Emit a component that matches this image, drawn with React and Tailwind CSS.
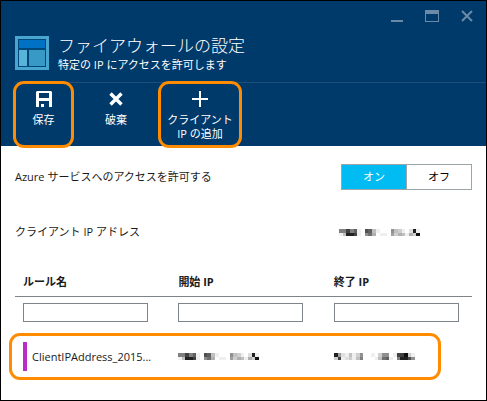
const MASKED_START = [
  '88c8a10ba41000743102e1',
  '14eec1079501106354153f',
];
const MASKED_END = [
  'e6214137001037701ccf31',
  '3c123148000149a108eeb7',
];

function MaskedAddress({ rows, label }) {
  return (
    <svg
      width="81"
      height="7"
      viewBox="0 0 22 2"
      preserveAspectRatio="none"
      shapeRendering="crispEdges"
      role="img"
      aria-label={label}
      className="block"
    >
      {rows.map((row, y) =>
        row.split('').map((c, x) => (
          <rect key={`${x}-${y}`} x={x} y={y} width="1" height="1" fill="#111" fillOpacity={parseInt(c, 16) / 15} />
        ))
      )}
    </svg>
  );
}

function Highlight({ className }) {
  return <span aria-hidden="true" className={`pointer-events-none absolute rounded-[11px] border-3 border-[#ff8c00] ${className}`} />;
}

function BladeIcon() {
  return (
    <svg width="34" height="34" viewBox="0 0 34 34" shapeRendering="crispEdges" aria-hidden="true" className="shrink-0">
      <rect width="34" height="34" fill="#48a5cf" />
      <rect x="3" y="3" width="28" height="28" fill="#00477a" />
      <rect x="4" y="4" width="26" height="8" fill="#0072c6" />
      <rect x="4" y="14" width="8" height="16" fill="#59b4d9" />
      <rect x="14" y="14" width="16" height="16" fill="#3999c6" />
    </svg>
  );
}

function SaveIcon() {
  return (
    <svg width="16" height="16" viewBox="0 0 16 16" aria-hidden="true">
      <path fill="#fff" fillRule="evenodd" d="M1 0h14l1 1v15h-3v-6H3v6H0V1zM3 2v5h10V2z" />
      <path fill="#fff" d="M5 13h3v3H5z" />
    </svg>
  );
}

function DiscardIcon() {
  return (
    <svg width="16" height="16" viewBox="0 0 16 16" aria-hidden="true">
      <path d="M2.5 2.5l11 11M13.5 2.5l-11 11" stroke="#fff" strokeWidth="3.4" />
    </svg>
  );
}

function AddIcon() {
  return (
    <svg width="16" height="16" viewBox="0 0 16 16" aria-hidden="true">
      <path d="M7 0h2v7h7v2H9v7H7V9H0V7h7z" fill="#fff" />
    </svg>
  );
}

function WindowControls() {
  return (
    <div className="flex justify-end gap-[22px] pt-[9px] pr-[13px]">
      <button type="button" aria-label="最小化">
        <svg width="12" height="12" viewBox="0 0 12 12" className="block"><path d="M0 10h12v2H0z" fill="#6b8aa8" /></svg>
      </button>
      <button type="button" aria-label="最大化">
        <svg width="14" height="12" viewBox="0 0 14 12" className="block"><path fillRule="evenodd" d="M0 0h14v12H0zM1 4v7h12V4z" fill="#6b8aa8" /></svg>
      </button>
      <button type="button" aria-label="閉じる">
        <svg width="12" height="12" viewBox="0 0 12 12" className="block"><path d="M1 1l10 10M11 1L1 11" stroke="#6b8aa8" strokeWidth="2" /></svg>
      </button>
    </div>
  );
}

const CELL = 'pl-2 text-left align-middle';

export default function App() {
  return (
    <div className="min-h-screen border border-black bg-white text-[11px] leading-[14px] text-[#1a1a1a] font-['Open_Sans','Noto_Sans_CJK_JP',sans-serif]">
      <header className="bg-[#003a6b] text-white">
        <WindowControls />
        <div className="flex gap-[9px] px-[14px] pt-[14px] pb-[10px]">
          <BladeIcon />
          <div>
            <h1 className="text-[17px] leading-[19px] font-light">ファイアウォールの設定</h1>
            <p className="pt-[3px]">特定の IP にアクセスを許可します</p>
          </div>
        </div>
        <div className="ml-[14px] border-t border-[#1d4f7b]" />
        <div className="flex h-[63px] pl-3">
          <button type="button" className="relative flex w-[61px] flex-col items-center gap-[6px] pt-2">
            <SaveIcon />
            <span>保存</span>
            <Highlight className="inset-x-0 -inset-y-[2px]" />
          </button>
          <button type="button" className="flex w-[84px] flex-col items-center gap-[6px] pt-2">
            <DiscardIcon />
            <span>破棄</span>
          </button>
          <button type="button" className="relative flex w-[84px] flex-col items-center gap-[6px] pt-2">
            <AddIcon />
            <span className="flex flex-col items-center">
              <span>クライアント</span>
              <span>IP の追加</span>
            </span>
            <Highlight className="inset-x-0 -inset-y-[2px]" />
          </button>
        </div>
      </header>

      <main className="px-[14px] pt-[18px]">
        <div className="flex h-[26px] items-center justify-between">
          <span id="azure-access">Azure サービスへのアクセスを許可する</span>
          <div role="group" aria-labelledby="azure-access" className="flex h-[26px] w-[131px] border border-[#9aa5a8]">
            <button type="button" aria-pressed="true" className="flex-1 border-r border-[#9aa5a8] bg-[#00bcf2] text-white">オン</button>
            <button type="button" aria-pressed="false" className="flex-1 bg-white text-black">オフ</button>
          </div>
        </div>
        <div className="mt-[29px] flex h-[26px] items-center justify-between pr-[52px]">
          <span>クライアント IP アドレス</span>
          <MaskedAddress rows={MASKED_START} label="クライアント IP アドレス" />
        </div>

        <table className="mt-[23px] w-full table-fixed border-collapse">
          <thead>
            <tr className="h-7 border-b border-[#7f838a]">
              <th scope="col" className={`w-[34%] ${CELL}`}>ルール名</th>
              <th scope="col" className={`w-[34%] ${CELL}`}>開始 IP</th>
              <th scope="col" className={`w-[32%] ${CELL}`}>終了 IP</th>
            </tr>
          </thead>
          <tbody>
            <tr className="h-[37px] align-top">
              {['ルール名', '開始 IP', '終了 IP'].map((name) => (
                <td key={name} className="pt-[6px] pl-2">
                  <input type="text" aria-label={name} className="block h-[19px] w-[125px] border border-[#7f838a] bg-white px-1" />
                </td>
              ))}
            </tr>
            <tr className="relative h-[47px]">
              <td className={CELL}>
                <div className="flex h-[29px] items-center border-l-4 border-[#ba2bc9] pl-[5px] whitespace-nowrap">ClientIPAddress_2015...</div>
                <Highlight className="inset-y-0 -left-[6px] right-[31px]" />
              </td>
              <td className={CELL}><MaskedAddress rows={MASKED_START} label="開始 IP" /></td>
              <td className={CELL}><MaskedAddress rows={MASKED_END} label="終了 IP" /></td>
            </tr>
          </tbody>
        </table>
      </main>
    </div>
  );
}
